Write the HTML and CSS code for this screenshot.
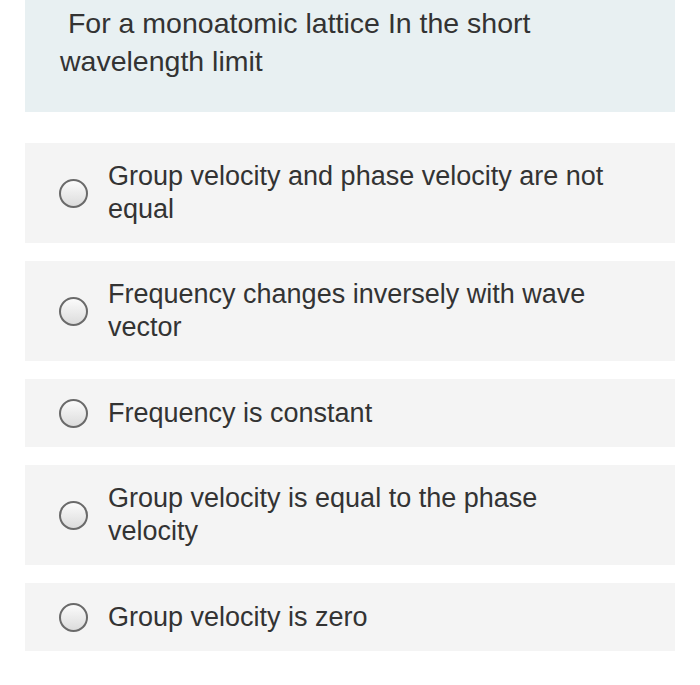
FILE: index.html
```html
<!DOCTYPE html>
<html>
<head>
<meta charset="utf-8">
<link rel="stylesheet" href="styles.css">
</head>
<body>
<div class="quiz">
  <div class="question">&nbsp;For a monoatomic lattice In the short wavelength limit</div>
  <div class="options">
    <label class="option"><span class="radio"></span><span class="text">Group velocity and phase velocity are not equal</span></label>
    <label class="option"><span class="radio"></span><span class="text">Frequency changes inversely with wave vector</span></label>
    <label class="option"><span class="radio"></span><span class="text">Frequency is constant</span></label>
    <label class="option"><span class="radio"></span><span class="text">Group velocity is equal to the phase velocity</span></label>
    <label class="option"><span class="radio"></span><span class="text">Group velocity is zero</span></label>
  </div>
</div>
</body>
</html>
```
FILE: styles.css
```css
html, body {
  margin: 0;
  padding: 0;
  background: #ffffff;
}
body {
  font-family: "Liberation Sans", Arial, sans-serif;
  color: #333333;
}
.quiz {
  padding: 0 25px;
}
.question {
  background: #e8f0f2;
  font-size: 28.5px;
  line-height: 37.5px;
  padding: 5px 35px 32px 35px;
}
.options {
  display: flex;
  flex-direction: column;
  gap: 18px;
  margin-top: 31px;
}
.option {
  display: flex;
  align-items: center;
  background: #f4f4f4;
  padding: 17px 50px 17px 34px;
  min-height: 34px;
}
.radio {
  flex: none;
  width: 25px;
  height: 25px;
  border: 2px solid #6a6a6a;
  border-radius: 50%;
  background: linear-gradient(#fbfbfb, #dcdcdc);
  margin-right: 20px;
}
.text {
  font-size: 27px;
  line-height: 33px;
}
```
